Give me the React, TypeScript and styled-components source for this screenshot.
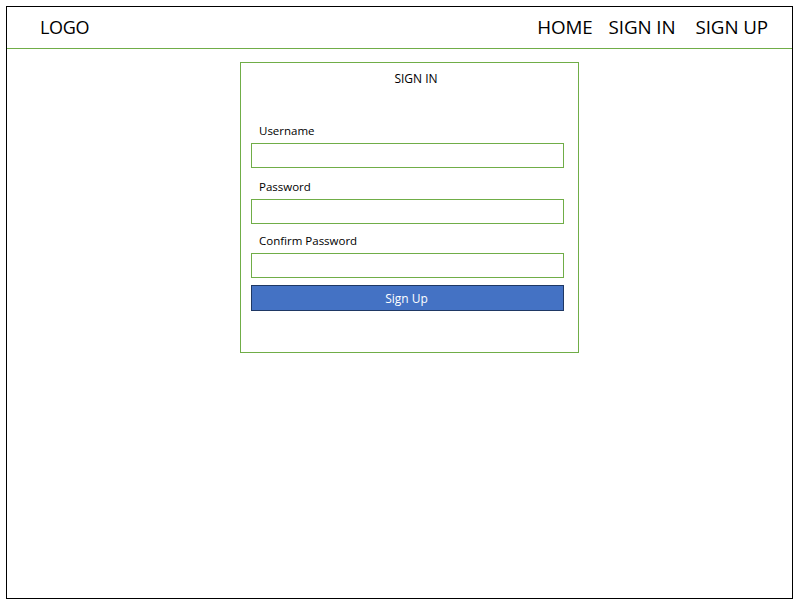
import React from "react";
import styled, { createGlobalStyle } from "styled-components";

const Global = createGlobalStyle`
  html, body { margin: 0; padding: 0; background: #ffffff; }
  body { font-family: "Open Sans", "Noto Sans", sans-serif; color: #000; }
  * { box-sizing: border-box; }
`;

const Frame = styled.div`
  margin: 6px 0 0 6px;
  width: 787px;
  height: 593px;
  border: 1px solid #000;
  display: flex;
  flex-direction: column;
`;

const Header = styled.header`
  height: 42px;
  border-bottom: 1px solid #70ad47;
  display: flex;
  align-items: center;
  padding: 0 24px 2px 33px;
  font-size: 18px;
  flex-shrink: 0;
`;

const Logo = styled.div`
  flex: 1;
  letter-spacing: -0.3px;
`;

const NavItem = styled.a<{ $gap: number }>`
  margin-left: ${(p) => p.$gap}px;
  color: #000;
  text-decoration: none;
  font-size: 18.8px;
  letter-spacing: -0.1px;
`;

const Main = styled.main`
  padding: 13px 0 0 233px;
`;

const Card = styled.section`
  width: 339px;
  height: 291px;
  border: 1px solid #70ad47;
  padding: 8px 14px 0 10px;
  display: flex;
  flex-direction: column;
`;

const Title = styled.div`
  font-size: 12px;
  text-align: center;
  padding-left: 17px;
  line-height: 16px;
  margin-bottom: 36px;
`;

const Field = styled.div<{ $top: number }>`
  display: flex;
  flex-direction: column;
  margin-top: ${(p) => p.$top}px;
`;

const Label = styled.label`
  font-size: 11.5px;
  line-height: 16px;
  padding-left: 8px;
  margin-bottom: 4px;
`;

const Input = styled.input`
  width: 313px;
  height: 25px;
  border: 1px solid #70ad47;
  margin: 0;
  padding: 0 6px;
  outline: none;
  background: #fff;
`;

const Button = styled.button`
  margin-top: 7px;
  width: 313px;
  height: 26px;
  border: 1px solid #1f3864;
  background: #4472c4;
  color: #fff;
  font-family: "Open Sans", "Noto Sans", sans-serif;
  font-size: 12px;
  padding: 0 2px 0 0;
  cursor: pointer;
`;

export default function App() {
  return (
    <>
      <Global />
      <Frame>
        <Header>
          <Logo>LOGO</Logo>
          <NavItem $gap={0}>HOME</NavItem>
          <NavItem $gap={16}>SIGN IN</NavItem>
          <NavItem $gap={20}>SIGN UP</NavItem>
        </Header>
        <Main>
          <Card>
            <Title>SIGN IN</Title>
            <Field $top={0}>
              <Label>Username</Label>
              <Input type="text" />
            </Field>
            <Field $top={11}>
              <Label>Password</Label>
              <Input type="password" />
            </Field>
            <Field $top={9}>
              <Label>Confirm Password</Label>
              <Input type="password" />
            </Field>
            <Button>Sign Up</Button>
          </Card>
        </Main>
      </Frame>
    </>
  );
}
